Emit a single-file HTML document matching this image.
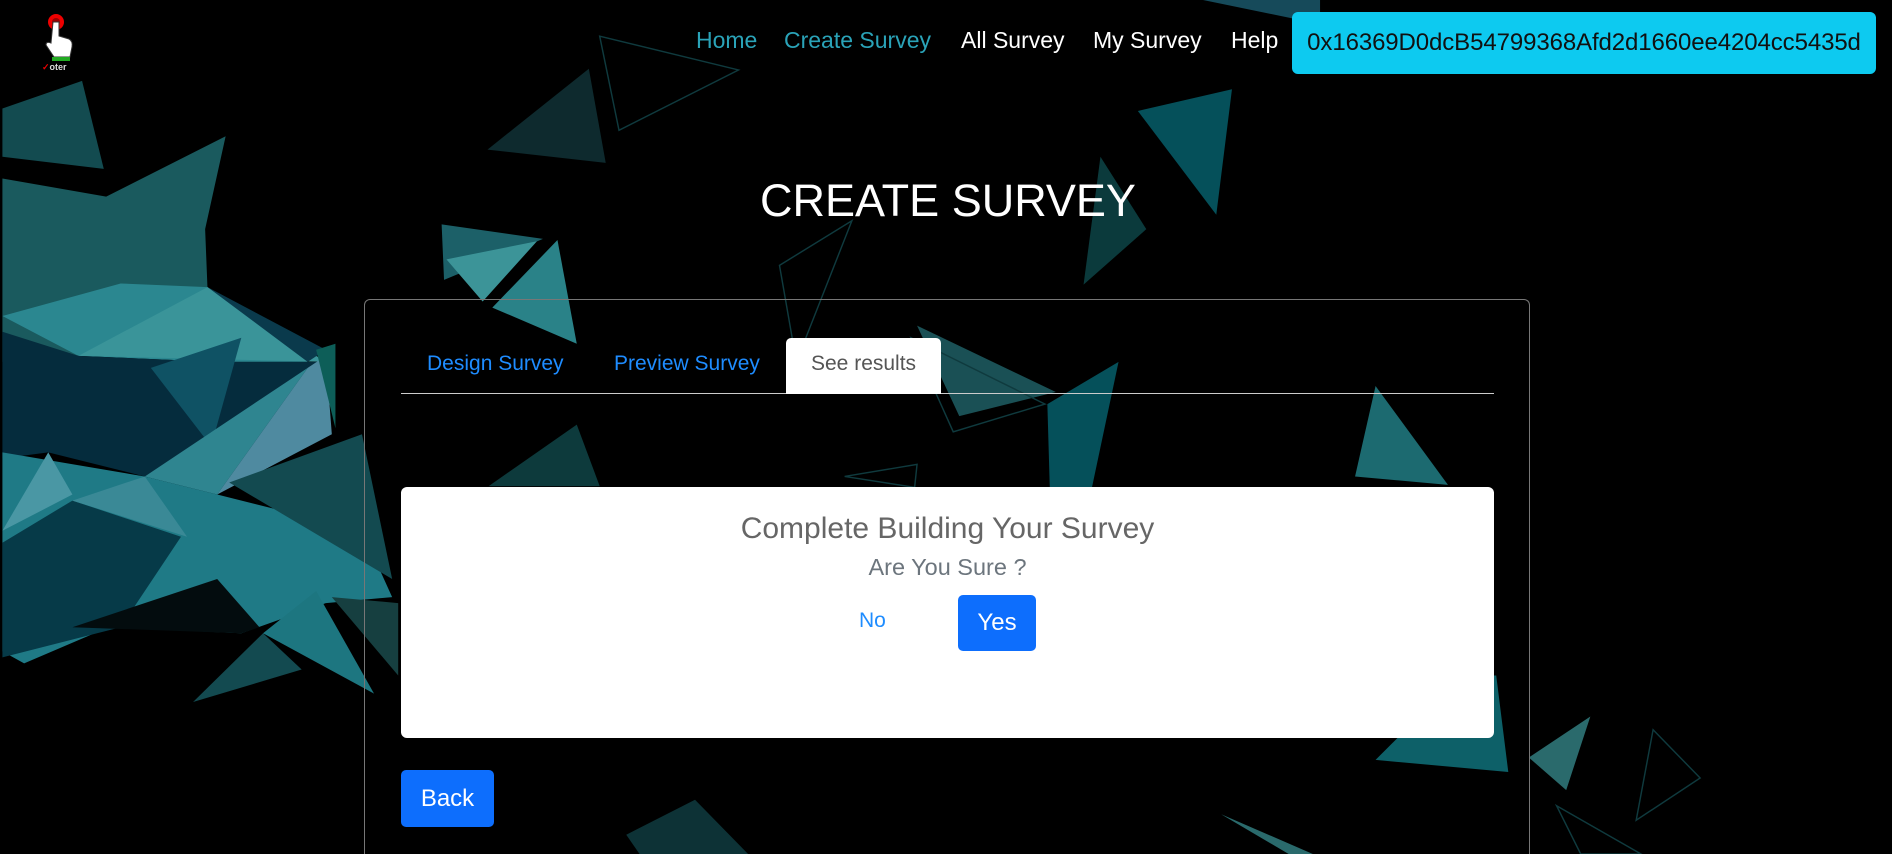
<!DOCTYPE html>
<html style="overflow:hidden;height:854px"><head><meta charset="utf-8"><style>
*{margin:0;padding:0;box-sizing:border-box}
body{width:1892px;height:854px;background:#000;overflow:hidden;position:relative;font-family:"Liberation Sans",Arial,sans-serif}
.a{position:absolute}
.nav{top:25px;font-size:23px;line-height:30px;color:#fff}
.btn{position:absolute;background:#0d6efd;color:#fff;border-radius:5px;font-size:24px;display:flex;align-items:center;justify-content:center}
.tab{position:absolute;top:352px;font-size:21px}
</style></head><body>
<svg class="a" style="left:0;top:0" width="1892" height="854" viewBox="0 0 1568 708" preserveAspectRatio="none">
<g stroke="none">
<polygon points="2,90 68,67 86,140 2,130" fill="#134b50"/>
<polygon points="2,148 88,163 187,113 170,190 172,240 62,296 2,300" fill="#1a5a5e"/>
<polygon points="2,262 100,235 172,238 255,300 180,300 65,295" fill="#2b8790"/>
<polygon points="65,295 172,238 270,300" fill="#3a9499"/>
<polygon points="172,238 270,290 255,300" fill="#0a3a4c"/>
<polygon points="2,275 65,295 180,300 270,300 180,410 120,395 40,375 2,380" fill="#052c3d"/>
<polygon points="125,305 200,280 175,370" fill="#0f5264"/>
<polygon points="255,305 270,295 275,360 180,410" fill="#4f8aa0"/>
<polygon points="120,395 255,305 180,410" fill="#2f8590"/>
<polygon points="2,375 120,395 180,410 300,440 325,495 270,500 200,525 90,520 20,550 2,540" fill="#1f7a86"/>
<polygon points="40,375 60,410 2,440" fill="#4a97a4"/>
<polygon points="60,415 150,445 100,520 2,545 2,450" fill="#063a48"/>
<polygon points="60,415 120,395 155,445" fill="#3a8996"/>
<polygon points="60,520 200,525 215,520 180,480" fill="#030c0e"/>
<polygon points="190,400 300,360 325,480" fill="#134a50"/>
<polygon points="262,290 278,285 278,355" fill="#0d5e58"/>
<polygon points="160,582 218,525 250,555" fill="#134a50"/>
<polygon points="218,525 262,490 310,575" fill="#1d7680"/>
<polygon points="275,495 330,500 330,560" fill="#163f40"/>
<polygon points="404,124 488,57 502,135" fill="#0e2a2e"/>
<polygon points="943,92 1021,74 1008,178" fill="#05505a"/>
<polygon points="898,236 912,130 950,190" fill="#0b3a3c"/>
<polygon points="366,186 450,198 368,232" fill="#1c6068"/>
<polygon points="370,215 445,200 400,250" fill="#3c9498"/>
<polygon points="408,255 462,199 478,285" fill="#2a8288"/>
<polygon points="760,270 875,325 795,345" fill="#1a5055"/>
<polygon points="868,335 927,300 905,404 870,404" fill="#05505a"/>
<polygon points="405,403 478,352 497,403" fill="#0d3a3c"/>
<polygon points="1123,395 1140,320 1200,402" fill="#1c6a70"/>
<polygon points="1210,560 1240,560 1250,640 1140,630" fill="#0d6068"/>
<polygon points="1267,628 1318,594 1298,655" fill="#2a6a6c"/>
<polygon points="1012,675 1068,708 1088,708" fill="#2a6a6c"/>
<polygon points="519,692 576,663 620,708 530,708" fill="#0d3236"/>
<polygon points="997,0 1094,0 1094,20" fill="#164a5a"/>
</g>
<g fill="none" stroke="#0f3a3e" stroke-width="1.2">
<polygon points="497,30 612,58 513,108"/>
<polygon points="646,220 706,183 660,300"/>
<polygon points="755,280 866,335 790,358"/>
<polygon points="1370,605 1409,645 1356,680"/>
<polygon points="1290,668 1360,708 1310,708"/>
<polygon points="700,395 760,385 758,404"/>
</g>
</svg>
<svg class="a" style="left:38px;top:12px" width="42" height="62" viewBox="0 0 42 62">
<circle cx="18" cy="10" r="8" fill="#e00"/><circle cx="18" cy="10" r="4" fill="#900"/>
<path d="M15 10 h6 v14 l10 3 q4 2 3 8 l-2 10 h-16 l-8 -12 q0 -4 5 -2 z" fill="#fff" stroke="#333" stroke-width="1"/>
<rect x="14" y="45" width="18" height="4" fill="#2a2"/>
<text x="4" y="58" font-size="9" fill="#ddd" font-family="Liberation Sans" font-weight="bold"><tspan fill="#e00">✓</tspan>oter</text>
</svg>
<div class="a nav" style="left:696px;color:#2aa3b8">Home</div>
<div class="a nav" style="left:784px;color:#2aa3b8">Create Survey</div>
<div class="a nav" style="left:961px">All Survey</div>
<div class="a nav" style="left:1093px">My Survey</div>
<div class="a nav" style="left:1231px">Help</div>
<div class="a" style="left:1292px;top:12px;width:584px;height:62px;background:#0dcaf0;border-radius:6px;color:#111;font-size:24px;display:flex;align-items:center;justify-content:center;letter-spacing:-0.1px">0x16369D0dcB54799368Afd2d1660ee4204cc5435d</div>
<div class="a" style="left:760px;top:173px;color:#fff;font-size:45px;line-height:56px">CREATE SURVEY</div>
<div class="a" style="left:364px;top:299px;width:1166px;height:560px;border:1px solid #777;border-bottom:none;border-radius:6px 6px 0 0"></div>
<div class="a" style="left:401px;top:393px;width:1093px;height:1px;background:#ccc"></div>
<div class="a" style="left:786px;top:338px;width:155px;height:56px;background:#fff;border-radius:5px 5px 0 0"></div>
<div class="tab" style="left:427px;color:#1e8cff">Design Survey</div>
<div class="tab" style="left:614px;color:#1e8cff">Preview Survey</div>
<div class="tab" style="left:811px;color:#555">See results</div>
<div class="a" style="left:401px;top:487px;width:1093px;height:251px;background:#fff;border-radius:6px"></div>
<div class="a" style="left:401px;width:1093px;top:512px;text-align:center;font-size:30px;color:#666">Complete Building Your Survey</div>
<div class="a" style="left:401px;width:1093px;top:554px;text-align:center;font-size:23.5px;color:#6c757d">Are You Sure ?</div>
<div class="a" style="left:859px;top:609px;font-size:21px;color:#1e8cff">No</div>
<div class="btn" style="left:958px;top:595px;width:78px;height:56px">Yes</div>
<div class="btn" style="left:401px;top:770px;width:93px;height:57px">Back</div>
</body></html>
